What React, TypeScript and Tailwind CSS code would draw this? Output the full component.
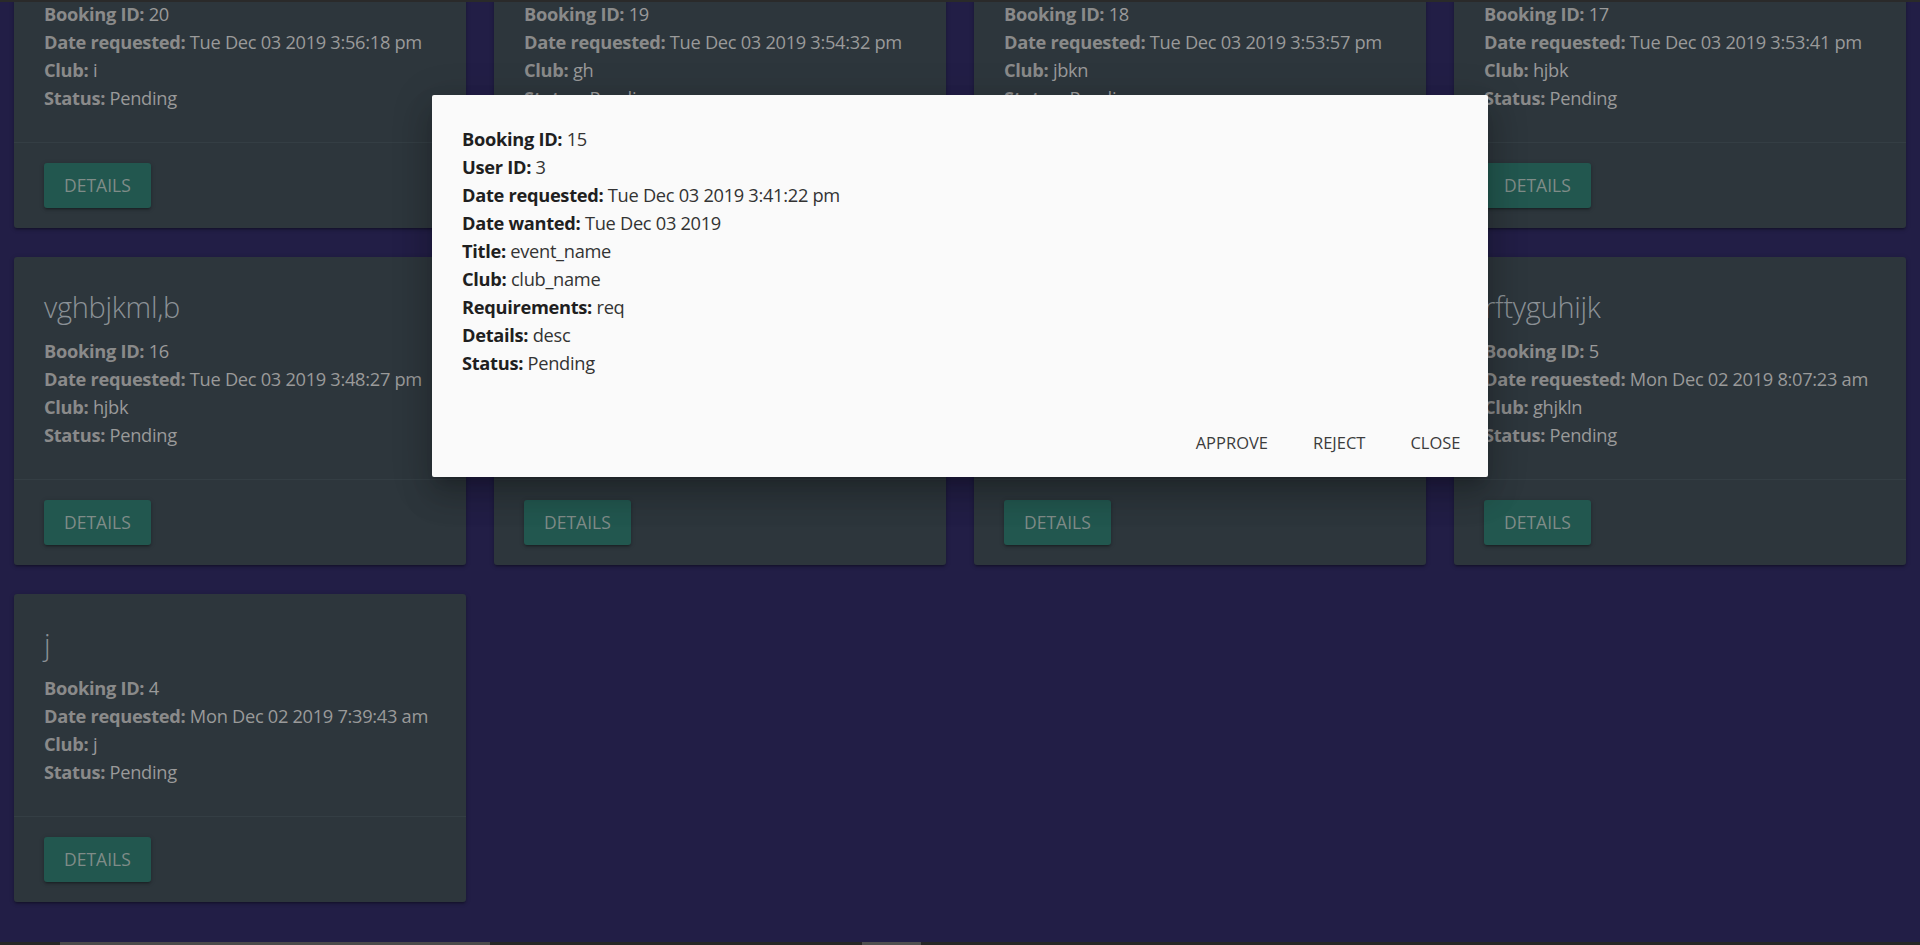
import React from "react";

type Booking = {
  title: string;
  id: number;
  requested: string;
  club: string;
};

const bookings: Booking[] = [
  { title: "ghjk", id: 20, requested: "Tue Dec 03 2019 3:56:18 pm", club: "i" },
  { title: "hgjk", id: 19, requested: "Tue Dec 03 2019 3:54:32 pm", club: "gh" },
  { title: "bhjkn", id: 18, requested: "Tue Dec 03 2019 3:53:57 pm", club: "jbkn" },
  { title: "vbnm", id: 17, requested: "Tue Dec 03 2019 3:53:41 pm", club: "hjbk" },
  { title: "vghbjkml,b", id: 16, requested: "Tue Dec 03 2019 3:48:27 pm", club: "hjbk" },
  { title: "event_name", id: 15, requested: "Tue Dec 03 2019 3:41:22 pm", club: "club_name" },
  { title: "tfyguhij", id: 6, requested: "Mon Dec 02 2019 8:12:05 am", club: "fghj" },
  { title: "rftyguhijk", id: 5, requested: "Mon Dec 02 2019 8:07:23 am", club: "ghjkln" },
  { title: "j", id: 4, requested: "Mon Dec 02 2019 7:39:43 am", club: "j" },
];

const details: [string, string][] = [
  ["Booking ID", "15"],
  ["User ID", "3"],
  ["Date requested", "Tue Dec 03 2019 3:41:22 pm"],
  ["Date wanted", "Tue Dec 03 2019"],
  ["Title", "event_name"],
  ["Club", "club_name"],
  ["Requirements", "req"],
  ["Details", "desc"],
  ["Status", "Pending"],
];

function Line({ label, value }: { label: string; value: string }) {
  return (
    <p className="whitespace-nowrap">
      <b className="font-bold text-[#8a8a8a]">{label}:</b> {value}
    </p>
  );
}

function BookingCard({ b }: { b: Booking }) {
  return (
    <div className="rounded-[3px] bg-[#2d363c] shadow-[0_2px_2px_0_rgba(0,0,0,0.14),0_3px_1px_-2px_rgba(0,0,0,0.12),0_1px_5px_0_rgba(0,0,0,0.2)]">
      <div className="p-[30px] text-[#9a9a9a]">
        <span className="mb-[10px] block text-[29px] font-light leading-[40px] text-[#8b9196]">
          {b.title}
        </span>
        <Line label="Booking ID" value={String(b.id)} />
        <Line label="Date requested" value={b.requested} />
        <Line label="Club" value={b.club} />
        <Line label="Status" value="Pending" />
      </div>
      <div className="border-t border-[#343e44] px-[30px] py-[20px]">
        <button className="h-[45px] rounded-[3px] bg-[#22574f] px-[20px] text-[17.5px] uppercase leading-[45px] tracking-normal text-[#7f8c88] shadow-[0_2px_2px_0_rgba(0,0,0,0.14),0_3px_1px_-2px_rgba(0,0,0,0.12),0_1px_5px_0_rgba(0,0,0,0.2)]">
          Details
        </button>
      </div>
    </div>
  );
}

export default function App() {
  return (
    <div className="relative h-screen overflow-hidden bg-[#221e46] font-['Open_Sans',sans-serif] text-[18.25px] leading-[28px] tracking-[-0.3px]">
      <div className="-mt-[80px] grid grid-cols-4 gap-x-[28px] gap-y-[29px] px-[14px]">
        {bookings.map((b) => (
          <BookingCard key={b.id} b={b} />
        ))}
      </div>

      <div className="absolute inset-x-0 top-0 h-[2px] bg-[#2a2a2a]" />

      <div className="absolute left-1/2 top-[95px] w-[1056px] -translate-x-1/2 rounded-[2px] bg-[#fafafa] shadow-[0_20px_30px_3px_rgba(0,0,0,0.14),0_8px_38px_6px_rgba(0,0,0,0.12),0_10px_12px_-8px_rgba(0,0,0,0.2)]">
        <div className="p-[30px] text-[#333]">
          {details.map(([label, value]) => (
            <p key={label}>
              <b className="font-bold text-[#1f1f1f]">{label}:</b> {value}
            </p>
          ))}
        </div>
        <div className="flex h-[70px] items-center justify-end gap-[5px] px-[7.5px]">
          {["Approve", "Reject", "Close"].map((t) => (
            <button
              key={t}
              className="h-[45px] rounded-[2px] px-[20px] text-[16.5px] uppercase leading-[45px] tracking-normal text-[#3c3c3c]"
            >
              {t}
            </button>
          ))}
        </div>
      </div>

      <div className="absolute inset-x-0 bottom-0 flex h-[3px] bg-[#262626]">
        <div className="ml-[60px] w-[430px] bg-[#4a4a4a]" />
        <div className="ml-[372px] w-[59px] bg-[#4f4f4f]" />
      </div>
    </div>
  );
}
